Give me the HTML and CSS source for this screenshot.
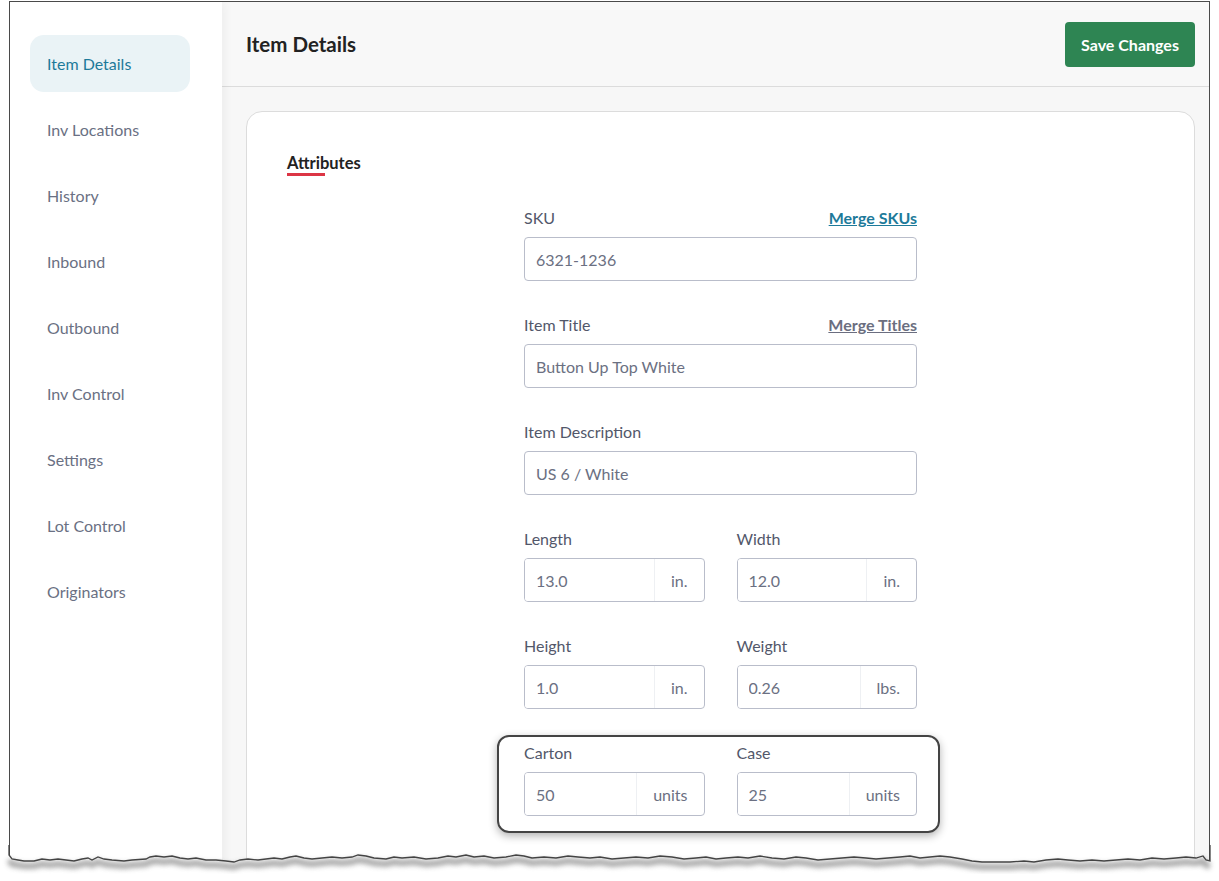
FILE: index.html
```html
<!DOCTYPE html>
<html lang="en">
<head>
    <meta charset="UTF-8">
    <meta name="viewport" content="width=device-width, initial-scale=1.0">
    <title>Item Details</title>
    <link rel="stylesheet" href="styles.css">
</head>
<body>

    <div class="frame">
        <nav class="sidebar">
            <a class="nav-item active" href="#">Item Details</a>
            <a class="nav-item" href="#">Inv Locations</a>
            <a class="nav-item" href="#">History</a>
            <a class="nav-item" href="#">Inbound</a>
            <a class="nav-item" href="#">Outbound</a>
            <a class="nav-item" href="#">Inv Control</a>
            <a class="nav-item" href="#">Settings</a>
            <a class="nav-item" href="#">Lot Control</a>
            <a class="nav-item" href="#">Originators</a>
        </nav>

        <main class="main">
            <header class="topbar">
                <h1>Item Details</h1>
                <button class="save-btn">Save Changes</button>
            </header>

            <div class="content">
                <section class="card">
                    <h2 class="section-title">Attributes</h2>

                    <div class="form">
                        <div class="field">
                            <div class="label-row">
                                <label>SKU</label>
                                <a class="merge-link primary" href="#">Merge SKUs</a>
                            </div>
                            <input class="text-input" type="text" value="6321-1236">
                        </div>

                        <div class="field">
                            <div class="label-row">
                                <label>Item Title</label>
                                <a class="merge-link" href="#">Merge Titles</a>
                            </div>
                            <input class="text-input" type="text" value="Button Up Top White">
                        </div>

                        <div class="field">
                            <div class="label-row">
                                <label>Item Description</label>
                            </div>
                            <input class="text-input" type="text" value="US 6 / White">
                        </div>

                        <div class="field-pair">
                            <div class="field">
                                <div class="label-row"><label>Length</label></div>
                                <div class="input-group">
                                    <input type="text" value="13.0">
                                    <span class="addon">in.</span>
                                </div>
                            </div>
                            <div class="field">
                                <div class="label-row"><label>Width</label></div>
                                <div class="input-group">
                                    <input type="text" value="12.0">
                                    <span class="addon">in.</span>
                                </div>
                            </div>
                        </div>

                        <div class="field-pair">
                            <div class="field">
                                <div class="label-row"><label>Height</label></div>
                                <div class="input-group">
                                    <input type="text" value="1.0">
                                    <span class="addon">in.</span>
                                </div>
                            </div>
                            <div class="field">
                                <div class="label-row"><label>Weight</label></div>
                                <div class="input-group">
                                    <input type="text" value="0.26">
                                    <span class="addon">lbs.</span>
                                </div>
                            </div>
                        </div>

                        <div class="field-pair highlight">
                            <div class="field">
                                <div class="label-row"><label>Carton</label></div>
                                <div class="input-group">
                                    <input type="text" value="50">
                                    <span class="addon">units</span>
                                </div>
                            </div>
                            <div class="field">
                                <div class="label-row"><label>Case</label></div>
                                <div class="input-group">
                                    <input type="text" value="25">
                                    <span class="addon">units</span>
                                </div>
                            </div>
                        </div>
                    </div>
                </section>
            </div>
        </main>
    </div>

    <!-- torn bottom edge of the screenshot -->
    <svg class="torn-edge" width="1219" height="36" viewBox="0 0 1219 36">
        <defs>
            <filter id="blur" x="-5%" y="-100%" width="110%" height="300%">
                <feGaussianBlur stdDeviation="2.5"/>
            </filter>
        </defs>
        <path fill="#fff" d="M0,0 L9,0 L9,10 L12,14 L18,15 L24,16 L34,16 L42,14 L50,15 L58,14 L66,15 L74,16 L82,14 L88,13 L92,15 L98,12 L104,14 L112,15 L124,16 L132,15 L146,14 L150,12 L156,11 L164,12 L172,11 L180,13 L188,14 L196,13 L206,15 L216,15 L226,16 L234,17 L240,15 L248,14 L258,15 L266,14 L274,13 L282,14 L290,12 L296,11 L304,13 L312,14 L322,13 L332,12 L342,13 L352,12 L358,10 L366,11 L374,13 L386,14 L394,12 L402,13 L414,12 L426,14 L438,13 L448,11 L456,12 L466,10 L474,12 L484,11 L494,13 L506,12 L516,10 L524,11 L532,13 L544,12 L556,13 L568,11 L578,12 L590,13 L600,12 L612,14 L624,13 L636,12 L648,13 L660,11 L672,12 L684,14 L696,13 L706,12 L716,14 L726,13 L738,12 L748,13 L760,11 L772,13 L784,14 L796,12 L806,13 L818,15 L830,14 L842,13 L854,12 L866,13 L876,14 L888,13 L900,12 L910,11 L920,13 L930,12 L940,11 L950,12 L962,14 L972,16 L982,17 L996,17 L1010,17 L1024,16 L1034,17 L1046,15 L1058,14 L1068,15 L1080,16 L1092,15 L1104,16 L1116,15 L1128,14 L1140,15 L1152,13 L1164,14 L1176,13 L1186,12 L1196,13 L1203,11 L1206,15 L1210,16 L1210,0 L1219,0 L1219,36 L0,36 Z"/>
        <path class="edge-shadow" filter="url(#blur)" transform="translate(0,5)" d="M9,10 L12,14 L18,15 L24,16 L34,16 L42,14 L50,15 L58,14 L66,15 L74,16 L82,14 L88,13 L92,15 L98,12 L104,14 L112,15 L124,16 L132,15 L146,14 L150,12 L156,11 L164,12 L172,11 L180,13 L188,14 L196,13 L206,15 L216,15 L226,16 L234,17 L240,15 L248,14 L258,15 L266,14 L274,13 L282,14 L290,12 L296,11 L304,13 L312,14 L322,13 L332,12 L342,13 L352,12 L358,10 L366,11 L374,13 L386,14 L394,12 L402,13 L414,12 L426,14 L438,13 L448,11 L456,12 L466,10 L474,12 L484,11 L494,13 L506,12 L516,10 L524,11 L532,13 L544,12 L556,13 L568,11 L578,12 L590,13 L600,12 L612,14 L624,13 L636,12 L648,13 L660,11 L672,12 L684,14 L696,13 L706,12 L716,14 L726,13 L738,12 L748,13 L760,11 L772,13 L784,14 L796,12 L806,13 L818,15 L830,14 L842,13 L854,12 L866,13 L876,14 L888,13 L900,12 L910,11 L920,13 L930,12 L940,11 L950,12 L962,14 L972,16 L982,17 L996,17 L1010,17 L1024,16 L1034,17 L1046,15 L1058,14 L1068,15 L1080,16 L1092,15 L1104,16 L1116,15 L1128,14 L1140,15 L1152,13 L1164,14 L1176,13 L1186,12 L1196,13 L1203,11 L1206,15 L1210,16"/>
        <path class="edge-line" d="M9,0 L9,10 L12,14 L18,15 L24,16 L34,16 L42,14 L50,15 L58,14 L66,15 L74,16 L82,14 L88,13 L92,15 L98,12 L104,14 L112,15 L124,16 L132,15 L146,14 L150,12 L156,11 L164,12 L172,11 L180,13 L188,14 L196,13 L206,15 L216,15 L226,16 L234,17 L240,15 L248,14 L258,15 L266,14 L274,13 L282,14 L290,12 L296,11 L304,13 L312,14 L322,13 L332,12 L342,13 L352,12 L358,10 L366,11 L374,13 L386,14 L394,12 L402,13 L414,12 L426,14 L438,13 L448,11 L456,12 L466,10 L474,12 L484,11 L494,13 L506,12 L516,10 L524,11 L532,13 L544,12 L556,13 L568,11 L578,12 L590,13 L600,12 L612,14 L624,13 L636,12 L648,13 L660,11 L672,12 L684,14 L696,13 L706,12 L716,14 L726,13 L738,12 L748,13 L760,11 L772,13 L784,14 L796,12 L806,13 L818,15 L830,14 L842,13 L854,12 L866,13 L876,14 L888,13 L900,12 L910,11 L920,13 L930,12 L940,11 L950,12 L962,14 L972,16 L982,17 L996,17 L1010,17 L1024,16 L1034,17 L1046,15 L1058,14 L1068,15 L1080,16 L1092,15 L1104,16 L1116,15 L1128,14 L1140,15 L1152,13 L1164,14 L1176,13 L1186,12 L1196,13 L1203,11 L1206,15 L1210,16 L1210,0"/>
    </svg>

</body>
</html>
```

FILE: styles.css
```css
html, body {
    margin: 0;
    height: 881px;
    overflow: hidden;
    background-color: #fff;
}
body {
    font-family: Lato, "Open Sans", sans-serif;
    font-size: 16px;
    position: relative;
}
.frame {
    display: flex;
    box-sizing: border-box;
    width: 1201px;
    height: 880px;
    margin: 1px 0 0 9px;
    border: 1.5px solid #4a4a4a;
    border-bottom: none;
    overflow: hidden;
}

/* sidebar */
.sidebar {
    display: flex;
    flex-direction: column;
    gap: 9px;
    width: 212px;
    flex-shrink: 0;
    padding: 33px 0 0 20px;
    box-sizing: border-box;
    background-color: #fff;
    box-shadow: 2px 0 10px rgba(0, 0, 0, 0.05);
    position: relative;
    z-index: 1;
}
.nav-item {
    display: flex;
    align-items: center;
    width: 160px;
    height: 57px;
    padding-left: 17px;
    box-sizing: border-box;
    border-radius: 14px;
    font-size: 16px;
    color: #6a7083;
    text-decoration: none;
}
.nav-item.active {
    background-color: #eaf3f6;
    color: #1d7a9a;
}

/* main area */
.main {
    flex: 1;
    background-color: #f7f7f7;
}
.topbar {
    display: flex;
    align-items: center;
    justify-content: space-between;
    height: 84px;
    padding: 0 14px 0 24px;
    background-color: #f8f8f8;
    border-bottom: 1px solid #dcdcdc;
}
.topbar h1 {
    margin: 0;
    font-size: 20.5px;
    font-weight: 700;
    color: #222;
}
.save-btn {
    width: 130px;
    height: 45px;
    border: none;
    border-radius: 4px;
    background-color: #2e8553;
    color: #fff;
    font-family: inherit;
    font-size: 16px;
    font-weight: 700;
    cursor: pointer;
}
.content {
    padding: 24px 14px 0 24px;
}
.card {
    background-color: #fff;
    border: 1px solid #dcdcdc;
    border-radius: 16px;
    padding: 41px 40px 200px;
}
.section-title {
    display: inline-block;
    position: relative;
    margin: 0;
    font-size: 16.5px;
    line-height: 20px;
    font-weight: 700;
    color: #222;
}
.section-title::after {
    content: "";
    position: absolute;
    left: 0;
    top: 20px;
    width: 38px;
    height: 3px;
    background-color: #dc3545;
}

/* form */
.form {
    width: 393px;
    margin: 35px auto 0;
    display: flex;
    flex-direction: column;
    gap: 34px;
}
.field {
    display: flex;
    flex-direction: column;
    gap: 9px;
    min-width: 0;
}
.label-row {
    display: flex;
    justify-content: space-between;
    line-height: 20px;
    font-size: 16px;
    color: #52576a;
}
.merge-link {
    font-weight: 700;
    color: #6b6e80;
    text-decoration: underline;
}
.merge-link.primary {
    color: #1d7a9a;
}
.text-input,
.input-group {
    box-sizing: border-box;
    height: 44px;
    border: 1px solid #b9bdca;
    border-radius: 4px;
    background-color: #fff;
}
.text-input {
    width: 100%;
    padding: 0 11px;
    font-family: inherit;
    font-size: 16px;
    color: #6b7082;
    outline: none;
}
.input-group {
    display: flex;
    overflow: hidden;
}
.input-group input {
    flex: 1;
    width: 0;
    min-width: 0;
    border: none;
    padding: 0 11px;
    font-family: inherit;
    font-size: 16px;
    color: #6b7082;
    outline: none;
}
.addon {
    display: flex;
    align-items: center;
    padding: 0 16px;
    border-left: 1px solid #eef0f3;
    font-size: 16px;
    color: #6b7082;
}
.field-pair {
    display: grid;
    grid-template-columns: repeat(2, minmax(0, 1fr));
    gap: 32px;
}
.highlight {
    position: relative;
}
.highlight::after {
    content: "";
    position: absolute;
    top: -8px;
    left: -27px;
    right: -23px;
    bottom: -17px;
    border: 2px solid #444;
    border-radius: 12px;
    box-shadow: 0 3px 8px rgba(0, 0, 0, 0.3);
    pointer-events: none;
}

/* torn edge overlay */
.torn-edge {
    position: absolute;
    left: 0;
    top: 845px;
    z-index: 2;
}
.edge-shadow {
    fill: none;
    stroke: #8a8a8a;
    stroke-width: 6;
    opacity: 0.75;
}
.edge-line {
    fill: none;
    stroke: #444;
    stroke-width: 1.3;
}
```
